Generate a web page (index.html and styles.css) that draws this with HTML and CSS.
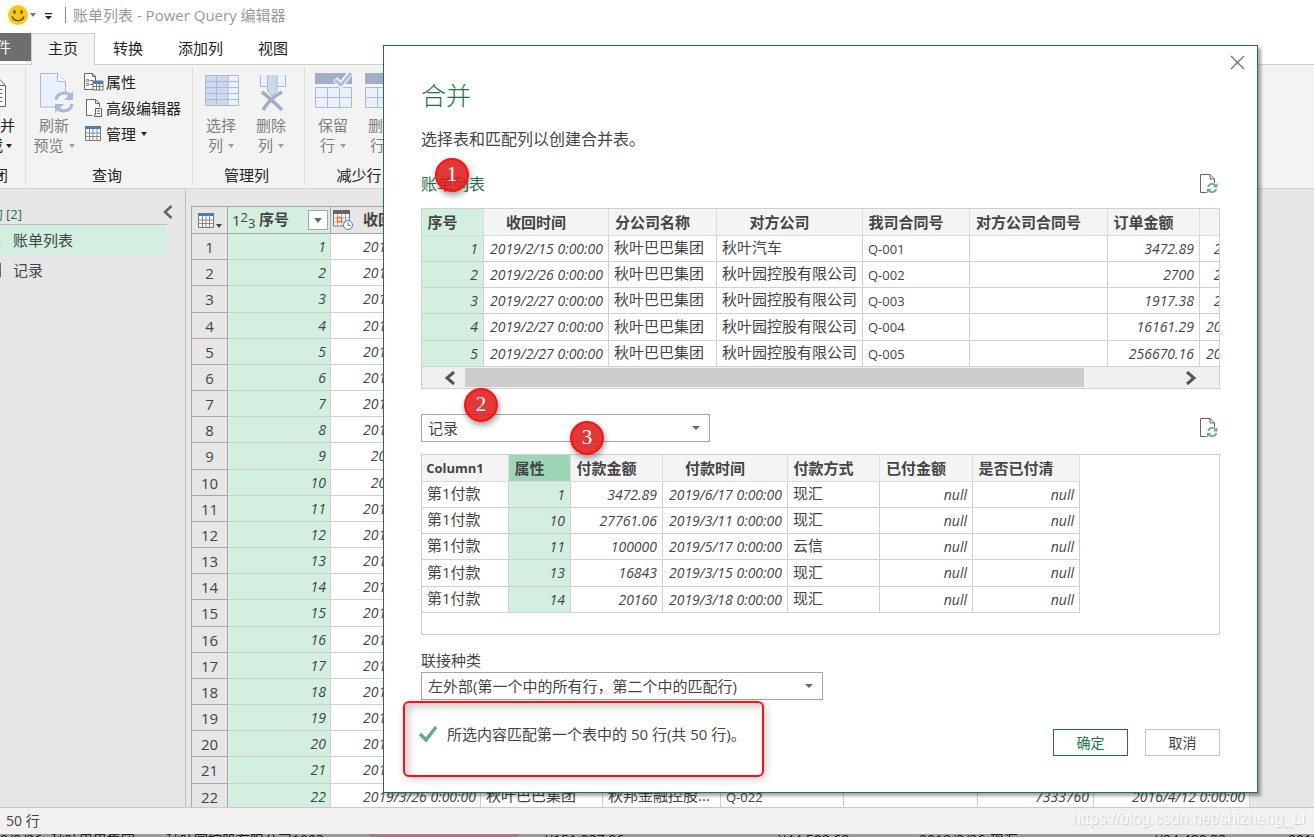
FILE: index.html
```html
<!DOCTYPE html>
<html lang="zh-CN">
<head>
<meta charset="utf-8">
<title>账单列表 - Power Query 编辑器</title>
<link rel="stylesheet" href="styles.css">
</head>
<body>
<header class="titlebar">
  <svg class="smile" viewBox="0 0 20 20"><circle cx="10" cy="10" r="10" fill="#fcc80f"/><ellipse cx="6.500" cy="7" rx="1.200" ry="2" fill="#4d4a3c"/><ellipse cx="13.500" cy="7" rx="1.200" ry="2" fill="#4d4a3c"/><path d="M4 11.500c2 5.500 10 5.500 12 0" fill="none" stroke="#4d4a3c" stroke-width="1.400"/></svg>
  <svg class="caret light" viewBox="0 0 6 4"><path d="M0 0h6L3 4z"/></svg>
  <svg class="quick" viewBox="0 0 8 7"><path d="M0 0h7v1.300H0zM0 3h7L3.500 6.500z"/></svg>
  <span class="title">账单列表 - Power Query 编辑器</span>
</header>
<nav class="tabs">
  <button class="tab file">文件</button>
  <button class="tab active">主页</button>
  <button class="tab">转换</button>
  <button class="tab">添加列</button>
  <button class="tab">视图</button>
</nav>
<section class="ribbon">
  <div class="group cut">
    <button class="big dark"><svg class="bigicon" viewBox="0 0 36 40"><path d="M1 5.500h14l8.500 9V35.500H1z" fill="#fff" stroke="#666"/><path d="M15 5.500v9h8M5 18.500h15M5 22.500h15M5 26.500h15M5 30.500h15" fill="none" stroke="#666"/></svg><span>关闭并</span><span>上载<svg class="caret" viewBox="0 0 6 4"><path d="M0 0h6L3 4z"/></svg></span></button>
    <div class="gname">关闭</div>
  </div>
  <div class="group query">
    <div class="tools">
      <button class="big"><svg class="bigicon" viewBox="0 0 36 40"><path d="M4.500 2.500h17l8 8V36h-25z" fill="#eaf1fb" stroke="#a9b9d6"/><path d="M21.500 2.500v8h8" fill="#fff" stroke="#a9b9d6"/><circle cx="28" cy="31" r="10" fill="#f3f3f3"/><path d="M20 29c1-8 12-9 15-3M36 33c-1 8-12 9-15 3" fill="none" stroke="#a9b9d6" stroke-width="3"/><path d="M37 20v9h-9zM19 42v-9h9z" fill="#a9b9d6"/></svg><span>刷新</span><span>预览<svg class="caret" viewBox="0 0 6 4"><path d="M0 0h6L3 4z"/></svg></span></button>
      <div class="stack">
        <button class="small"><svg viewBox="0 0 20 20"><path d="M.5 1.500h8l3 3V17.500H.5z" fill="#fff" stroke="#666"/><path d="M8.500 1.500v3h3M6 8.500h3M6 12.500h3" fill="none" stroke="#666"/><path d="M2.500 7.500h2v2h-2zM2.500 11.500h2v2h-2z" fill="none" stroke="#888"/><path d="M9 9h10v9H9z" fill="#fff" stroke="#777"/><path d="M9 9h10v3H9z" fill="#4a7ebb"/><path d="M9 14.500h10M12.500 12v6M15.500 12v6" stroke="#777"/></svg>属性</button>
        <button class="small"><svg viewBox="0 0 20 20"><path d="M2.500 1.500h9l4 4V17.500h-13z" fill="#fff" stroke="#666"/><path d="M11.500 1.500v4h4" fill="none" stroke="#666"/><path d="M9 9h10v11H8z" fill="#f3f3f3"/><path d="M11.500 10.500h6v8h-7v-2h1zM13 13h3M13 15.500h3" fill="#fff" stroke="#666"/></svg>高级编辑器</button>
        <button class="small"><svg viewBox="0 0 20 20"><path d="M1.500 4h15v12.500h-15z" fill="#fff" stroke="#777"/><path d="M1 2h16v3H1z" fill="#4a7ebb"/><path d="M1.500 9h15M1.500 12.500h15M5.500 5v11.500M9 5v11.500M13 5v11.500" stroke="#888"/></svg>管理<svg class="caret" viewBox="0 0 6 4"><path d="M0 0h6L3 4z"/></svg></button>
      </div>
    </div>
    <div class="gname">查询</div>
  </div>
  <div class="group">
    <div class="tools">
      <button class="big"><svg class="bigicon" viewBox="0 0 36 40"><path d="M2.500 4.500h33v30h-33z" fill="#eaf1fb" stroke="#a9b9d6"/><path d="M3 5h22v29H3z" fill="#cdd9ea"/><path d="M3 10.500h32M3 16.500h32M3 22.500h32M3 28.500h32M13.500 5v29M25 5v29" stroke="#a9b9d6"/></svg><span>选择</span><span>列<svg class="caret" viewBox="0 0 6 4"><path d="M0 0h6L3 4z"/></svg></span></button>
      <button class="big"><svg class="bigicon" viewBox="0 0 36 40"><path d="M7.500 4v11.500h7V4M23.500 4v11.500h9V4" fill="#eaf1fb" stroke="#a9b9d6"/><path d="M14.500 4v16l4.500 5 5-5V4" fill="#cdd9ea" stroke="#a9b9d6"/><path d="M9 21q7 5 20 18M29 21Q17 27 10 39" fill="none" stroke="#a0aec8" stroke-width="3.500"/></svg><span>删除</span><span>列<svg class="caret" viewBox="0 0 6 4"><path d="M0 0h6L3 4z"/></svg></span></button>
    </div>
    <div class="gname">管理列</div>
  </div>
  <div class="group last">
    <div class="tools">
      <button class="big"><svg class="bigicon" viewBox="0 0 38 40"><path d="M1 2h37v11H1z" fill="#a0aec8"/><path d="M1.500 16.500h36v20h-36zM1.500 26.500h36M13.500 16.500v20M25.500 16.500v20" fill="#eaf1fb" stroke="#a9b9d6"/><path d="M21 8l6 6L37 1" fill="none" stroke="#f3f3f3" stroke-width="6"/><path d="M21 9l6 5L37 2" fill="none" stroke="#b3bfd5" stroke-width="3"/></svg><span>保留</span><span>行<svg class="caret" viewBox="0 0 6 4"><path d="M0 0h6L3 4z"/></svg></span></button>
      <button class="big"><svg class="bigicon" viewBox="0 0 38 40"><path d="M1 2h37v11H1z" fill="#a0aec8"/><path d="M1.500 16.500h36v20h-36zM1.500 26.500h36M13.500 16.500v20M25.500 16.500v20" fill="#eaf1fb" stroke="#a9b9d6"/></svg><span>删除</span><span>行<svg class="caret" viewBox="0 0 6 4"><path d="M0 0h6L3 4z"/></svg></span></button>
    </div>
    <div class="gname">减少行</div>
  </div>
</section>
<main class="work">
  <aside class="queries">
    <div class="qhead"><span class="qtitle">查询 [2]</span><button class="collapse" aria-label="折叠"><svg viewBox="0 0 10 14"><path d="M8.500 1L2 7l6.500 6" fill="none" stroke="#666" stroke-width="2.600"/></svg></button></div>
    <ul class="qlist">
      <li class="on"><svg viewBox="0 0 12 18"><path d="M2 15L7 4l4 11z" fill="#f0bd62"/></svg><a href="#">账单列表</a></li>
      <li><svg viewBox="0 0 12 18"><path d="M0 2h10.500v14H0z" fill="#fff" stroke="#666"/><path d="M0 2h11v3H0z" fill="#4a7ebb"/></svg><a href="#">记录</a></li>
    </ul>
  </aside>
  <div class="gridpane">
    <table class="grid">
      <colgroup><col class="w36"><col class="w103"><col class="w150"><col class="w122"><col class="w118"><col class="w123"><col class="w134"><col class="w116"><col class="w156"></colgroup>
      <thead><tr>
        <th><div class="corner"><svg class="tbl" viewBox="0 0 16 15"><path d="M.5 2h15v12.500H.5z" fill="#fff" stroke="#777"/><path d="M0 0h16v3H0z" fill="#4a7ebb"/><path d="M.5 7h15M.5 10.500h15M4.500 3v11.500M8 3v11.500M11.500 3v11.500" stroke="#888"/></svg><svg class="caret" viewBox="0 0 6 4"><path d="M0 0h6L3 4z"/></svg></div></th>
        <th class="sel"><div class="colhead"><span class="type">1<sup>2</sup><sub>3</sub></span><span class="name">序号</span><button class="filter" aria-label="筛选"><svg class="caret" viewBox="0 0 6 4"><path d="M0 0h6L3 4z"/></svg></button></div></th>
        <th><div class="colhead"><svg class="cal" viewBox="0 0 20 20"><path d="M.5 2h16v14H.5z" fill="#fff" stroke="#777"/><path d="M0 0h17v4H0z" fill="#666"/><path d="M.5 8h16M.5 12h16M4.500 4v12M8.500 4v12M12.500 4v12" stroke="#aaa"/><path d="M4.500 7.500h4v4h-4z" fill="#fff" stroke="#e07b28" stroke-width="1.500"/><circle cx="15" cy="15" r="4.500" fill="#fff" stroke="#4a7ebb"/><path d="M15 12v3.500h2.500" fill="none" stroke="#4a7ebb"/></svg><span class="name date">收回时间</span></div></th>
        <th colspan="6"></th>
      </tr></thead>
      <tbody>
        <tr><th>1</th><td class="sel">1</td><td>2019/2/15 0:00:00</td><td colspan="6"></td></tr>
        <tr><th>2</th><td class="sel">2</td><td>2019/2/26 0:00:00</td><td colspan="6"></td></tr>
        <tr><th>3</th><td class="sel">3</td><td>2019/2/27 0:00:00</td><td colspan="6"></td></tr>
        <tr><th>4</th><td class="sel">4</td><td>2019/2/27 0:00:00</td><td colspan="6"></td></tr>
        <tr><th>5</th><td class="sel">5</td><td>2019/2/27 0:00:00</td><td colspan="6"></td></tr>
        <tr><th>6</th><td class="sel">6</td><td>2019/2/27 0:00:00</td><td colspan="6"></td></tr>
        <tr><th>7</th><td class="sel">7</td><td>2019/2/28 0:00:00</td><td colspan="6"></td></tr>
        <tr><th>8</th><td class="sel">8</td><td>2019/2/28 0:00:00</td><td colspan="6"></td></tr>
        <tr><th>9</th><td class="sel">9</td><td>2019/3/1 0:00:00</td><td colspan="6"></td></tr>
        <tr><th>10</th><td class="sel">10</td><td>2019/3/5 0:00:00</td><td colspan="6"></td></tr>
        <tr><th>11</th><td class="sel">11</td><td>2019/3/11 0:00:00</td><td colspan="6"></td></tr>
        <tr><th>12</th><td class="sel">12</td><td>2019/3/12 0:00:00</td><td colspan="6"></td></tr>
        <tr><th>13</th><td class="sel">13</td><td>2019/3/13 0:00:00</td><td colspan="6"></td></tr>
        <tr><th>14</th><td class="sel">14</td><td>2019/3/14 0:00:00</td><td colspan="6"></td></tr>
        <tr><th>15</th><td class="sel">15</td><td>2019/3/15 0:00:00</td><td colspan="6"></td></tr>
        <tr><th>16</th><td class="sel">16</td><td>2019/3/18 0:00:00</td><td colspan="6"></td></tr>
        <tr><th>17</th><td class="sel">17</td><td>2019/3/19 0:00:00</td><td colspan="6"></td></tr>
        <tr><th>18</th><td class="sel">18</td><td>2019/3/20 0:00:00</td><td colspan="6"></td></tr>
        <tr><th>19</th><td class="sel">19</td><td>2019/3/21 0:00:00</td><td colspan="6"></td></tr>
        <tr><th>20</th><td class="sel">20</td><td>2019/3/22 0:00:00</td><td colspan="6"></td></tr>
        <tr><th>21</th><td class="sel">21</td><td>2019/3/25 0:00:00</td><td colspan="6"></td></tr>
        <tr><th>22</th><td class="sel">22</td><td>2019/3/26 0:00:00</td><td class="txt">秋叶巴巴集团</td><td class="txt">秋邦金融控股...</td><td class="txt code">Q-022</td><td></td><td>7333760</td><td>2016/4/12 0:00:00</td></tr>
      </tbody>
    </table>
  </div>
</main>
<footer class="status"><span>50 行</span><span class="mark">https://blog.csdn.net/shizheng_Li</span></footer>
<div class="behind"><span class="b1">9/3/26</span><span class="b2">秋叶巴巴集团</span><span class="b3">秋叶园控股有限公司1023</span><span class="b4"></span><span class="b5">¥151,337.86</span><span class="b6">¥44,509.68</span><span class="b7">2019/3/26</span><span class="b8">现汇</span><span class="b9">¥24,480.33</span><span class="b10">2019</span></div>

<div class="dialog" role="dialog" aria-labelledby="dlg-title">
  <button class="close" aria-label="关闭"><svg viewBox="0 0 15 15"><path d="M1 1l13 13M14 1L1 14" fill="none" stroke="#777" stroke-width="1.400"/></svg></button>
  <h1 id="dlg-title">合并</h1>
  <p class="desc">选择表和匹配列以创建合并表。</p>
  <div class="row first"><h2>账单列表</h2><button class="refresh" aria-label="刷新"><svg viewBox="0 0 18 20"><path d="M6.500 18.500h-6V.5h9.500l4.500 4.500v4" fill="none" stroke="#666"/><path d="M10 .5V5h4.500" fill="none" stroke="#666"/><path d="M8 13c1.500-4 6.500-4 8-1M16.500 15c-1.500 4-6.500 4-8 1" fill="none" stroke="#6fab93" stroke-width="1.800"/><path d="M17.500 9v4.500H13zM7 19.500V15h4.500z" fill="#6fab93"/></svg></button></div>
  <div class="preview">
    <table class="data">
      <colgroup><col class="w62"><col class="w125"><col class="w108"><col class="w146"><col class="w107"><col class="w138"><col class="w92"><col class="w125"></colgroup>
      <thead><tr><th class="sel">序号</th><th>收回时间</th><th>分公司名称</th><th>对方公司</th><th>我司合同号</th><th>对方公司合同号</th><th>订单金额</th><th></th></tr></thead>
      <tbody>
        <tr><td class="sel">1</td><td>2019/2/15 0:00:00</td><td class="txt">秋叶巴巴集团</td><td class="txt">秋叶汽车</td><td class="txt code">Q-001</td><td></td><td>3472.89</td><td>2019/5/6 0:00:00</td></tr>
        <tr><td class="sel">2</td><td>2019/2/26 0:00:00</td><td class="txt">秋叶巴巴集团</td><td class="txt">秋叶园控股有限公司</td><td class="txt code">Q-002</td><td></td><td>2700</td><td>2019/5/6 0:00:00</td></tr>
        <tr><td class="sel">3</td><td>2019/2/27 0:00:00</td><td class="txt">秋叶巴巴集团</td><td class="txt">秋叶园控股有限公司</td><td class="txt code">Q-003</td><td></td><td>1917.38</td><td>2019/5/6 0:00:00</td></tr>
        <tr><td class="sel">4</td><td>2019/2/27 0:00:00</td><td class="txt">秋叶巴巴集团</td><td class="txt">秋叶园控股有限公司</td><td class="txt code">Q-004</td><td></td><td>16161.29</td><td>2019/5/16 0:00:00</td></tr>
        <tr><td class="sel">5</td><td>2019/2/27 0:00:00</td><td class="txt">秋叶巴巴集团</td><td class="txt">秋叶园控股有限公司</td><td class="txt code">Q-005</td><td></td><td>256670.16</td><td>2019/5/16 0:00:00</td></tr>
      </tbody>
    </table>
    <div class="scroll"><button aria-label="向左"><svg viewBox="0 0 12 14"><path d="M10 1L3 7l7 6" fill="none" stroke="#555" stroke-width="3"/></svg></button><div class="track"><div class="thumb"></div></div><button aria-label="向右"><svg viewBox="0 0 12 14"><path d="M2 1l7 6-7 6" fill="none" stroke="#555" stroke-width="3"/></svg></button></div>
  </div>
  <div class="row chooser"><div class="pick source"><select aria-label="第二个表"><option>记录</option></select><svg class="caret" viewBox="0 0 8 4"><path d="M0 0h8L4 4z"/></svg></div><button class="refresh" aria-label="刷新"><svg viewBox="0 0 18 20"><path d="M6.500 18.500h-6V.5h9.500l4.500 4.500v4" fill="none" stroke="#666"/><path d="M10 .5V5h4.500" fill="none" stroke="#666"/><path d="M8 13c1.500-4 6.500-4 8-1M16.500 15c-1.500 4-6.500 4-8 1" fill="none" stroke="#6fab93" stroke-width="1.800"/><path d="M17.500 9v4.500H13zM7 19.500V15h4.500z" fill="#6fab93"/></svg></button></div>
  <div class="preview">
    <table class="data">
      <colgroup><col class="w87"><col class="w62"><col class="w92"><col class="w125"><col class="w92"><col class="w93"><col class="w107"></colgroup>
      <thead><tr><th class="code">Column1</th><th class="picked">属性</th><th>付款金额</th><th>付款时间</th><th>付款方式</th><th>已付金额</th><th>是否已付清</th></tr></thead>
      <tbody>
        <tr><td class="txt">第1付款</td><td class="sel">1</td><td>3472.89</td><td>2019/6/17 0:00:00</td><td class="txt">现汇</td><td>null</td><td>null</td></tr>
        <tr><td class="txt">第1付款</td><td class="sel">10</td><td>27761.06</td><td>2019/3/11 0:00:00</td><td class="txt">现汇</td><td>null</td><td>null</td></tr>
        <tr><td class="txt">第1付款</td><td class="sel">11</td><td>100000</td><td>2019/5/17 0:00:00</td><td class="txt">云信</td><td>null</td><td>null</td></tr>
        <tr><td class="txt">第1付款</td><td class="sel">13</td><td>16843</td><td>2019/3/15 0:00:00</td><td class="txt">现汇</td><td>null</td><td>null</td></tr>
        <tr><td class="txt">第1付款</td><td class="sel">14</td><td>20160</td><td>2019/3/18 0:00:00</td><td class="txt">现汇</td><td>null</td><td>null</td></tr>
      </tbody>
    </table>
  </div>
  <label class="joinlabel" for="join">联接种类</label>
  <div class="pick join"><select id="join"><option>左外部(第一个中的所有行，第二个中的匹配行)</option></select><svg class="caret" viewBox="0 0 8 4"><path d="M0 0h8L4 4z"/></svg></div>
  <div class="foot">
    <svg class="check" viewBox="0 0 18 16"><path d="M1 8l6 6L17 1" fill="none" stroke="#6aa58d" stroke-width="3.400"/></svg>
    <span class="match">所选内容匹配第一个表中的 50 行(共 50 行)。</span>
    <button class="btn ok">确定</button><button class="btn">取消</button>
  </div>
  <div class="redbox"></div>
  <span class="pin p1">1</span><span class="pin p2">2</span><span class="pin p3">3</span>
</div>
</body>
</html>
```
FILE: styles.css
```css
* { box-sizing: border-box; }
body {
  margin: 0;
  height: 100vh;
  display: flex;
  flex-direction: column;
  overflow: hidden;
  position: relative;
  background: #fff;
  color: #444;
  font: 15px/20px "Open Sans", "Noto Sans CJK SC", sans-serif;
}
button {
  font: inherit;
  color: inherit;
  background: none;
  border: 0;
  padding: 0;
}
svg { display: block; flex: none; }
.caret { width: 6px; height: 4px; fill: currentColor; }

.titlebar {
  flex: none;
  height: 33px;
  display: flex;
  align-items: center;
  padding: 0 8px 4px;
}
.smile { width: 20px; height: 20px; }
.caret.light { color: #777; margin: 0 12px 0 2px; }
.quick { width: 8px; height: 7px; fill: #222; margin: 3px 12px 0 -3px; }
.title {
  border-left: 1px solid #888;
  padding-left: 7px;
  line-height: 16px;
  color: #999;
}

.tabs {
  flex: none;
  height: 32px;
  display: flex;
  align-items: flex-start;
  border-bottom: 1px solid #d0d0d0;
  color: #222;
}
.tab { height: 30px; padding: 0 17px 0 18px; }
.tab.file {
  width: 31px;
  height: 28px;
  display: flex;
  justify-content: flex-end;
  align-items: center;
  padding: 0 20px 0 0;
  background: #6e6e6e;
  color: #fff;
  white-space: nowrap;
}
.tab.active {
  height: 32px;
  padding: 0 16px 3px;
  border: 1px solid #d0d0d0;
  border-bottom: 0;
  background: #f3f3f3;
}

.ribbon {
  flex: none;
  height: 124px;
  display: flex;
  padding: 2px 0 3px;
  background: #f3f3f3;
  border-bottom: 1px solid #d0d0d0;
  color: #222;
}
.group {
  width: 112px;
  display: flex;
  flex-direction: column;
  justify-content: space-between;
  border-right: 1px solid #dcdcdc;
  padding: 4px 0 0;
}
.group.cut { width: 26px; overflow: hidden; align-items: flex-end; padding-right: 10px; }
.group.cut .gname { padding-right: 7px; }
.group.query { width: 167px; }
.group.last { border: 0; }
.gname { text-align: center; line-height: 20px; padding-right: 4px; white-space: nowrap; }
.tools { display: flex; padding-left: 3px; }
.big {
  width: 50px;
  display: flex;
  flex-direction: column;
  align-items: center;
  color: #808080;
  line-height: 20px;
  white-space: nowrap;
}
.big span { display: flex; align-items: center; gap: 5px; }
.big .caret { margin-top: 2px; color: #a0a0a0; }
.big.dark { color: #222; align-items: flex-end; }
.big.dark span { gap: 3px; }
.big.dark .bigicon { margin-right: -4px; }
.big.dark .caret { margin-right: 3px; color: #222; }
.bigicon { width: 38px; height: 40px; margin-bottom: 4px; overflow: visible; }
.query .big { margin-right: 5px; }
.stack { display: flex; flex-direction: column; margin-top: -2px; }
.small { display: flex; align-items: center; gap: 2px; height: 26px; white-space: nowrap; }
.small svg { width: 20px; height: 20px; }
.small .caret { width: 6px; height: 4px; margin-left: 3px; }

.work {
  flex: 1;
  min-height: 0;
  display: flex;
  background: #e6e6e6;
}
.queries {
  flex: none;
  width: 186px;
  border-right: 1px solid #bcbcbc;
  padding-right: 18px;
  overflow: hidden;
}
.qhead {
  height: 36px;
  display: flex;
  align-items: flex-end;
  border-bottom: 1px solid #bcbcbc;
  color: #217346;
  font-size: 13px;
}
.qtitle { width: 22px; display: flex; justify-content: flex-end; white-space: nowrap; }
.collapse { width: 10px; height: 14px; margin: 0 -6px 5px auto; }
.collapse svg { width: 10px; height: 14px; }
.qlist { list-style: none; margin: 0; padding: 0; }
.qlist li { height: 30px; display: flex; align-items: center; gap: 11px; }
.qlist svg { width: 12px; height: 18px; margin-left: -10px; }
.qlist a { color: #444; text-decoration: none; }
.on { background: #d3efe0; }

.gridpane { flex: 1; min-width: 0; padding: 17px 0 0 5px; overflow: hidden; }
table { border-collapse: separate; border-spacing: 0; table-layout: fixed; }
th, td { height: 26px; padding: 0; overflow: hidden; white-space: nowrap; }
thead th { height: 27px; }
td {
  font-size: 14px;
  font-style: italic;
  text-align: right;
  line-height: 20px;
  background: #fff;
  border: 0 solid #d0d0d0;
  border-width: 0 1px 1px 0;
}
td.txt { font-size: 15px; font-style: normal; text-align: left; padding: 0 0 3px 5px; }
td.code, th.code { font-size: 13px; }
td.txt.code { padding-bottom: 0; }
td.sel, th.sel { background: #d3efe0; }

.grid { width: 1059px; border: 1px solid #a6a6a6; border-right: 0; }
.grid td { padding-right: 4px; }
.grid th {
  background: #e6e6e6;
  border: 0 solid #a6a6a6;
  border-width: 0 1px 1px 0;
  font-weight: 400;
}
.grid thead th { font-weight: 600; }
.grid th.sel { background: #d3efe0; }
.grid tbody tr:nth-child(6n+3) td, .grid tbody tr:nth-child(6n+3) th { height: 27px; }
.corner { display: flex; align-items: flex-end; justify-content: center; gap: 2px; }
.tbl { width: 16px; height: 15px; }
.colhead { display: flex; align-items: center; padding: 0 2px 0 4px; color: #444; }
.type { width: 27px; text-align: left; font-weight: 400; line-height: 16px; }
.type sup, .type sub { font-size: 13px; line-height: 0; }
.type sup { vertical-align: 4px; }
.type sub { vertical-align: -2px; }
.name { padding-bottom: 3px; }
.filter {
  width: 20px;
  height: 20px;
  margin-left: auto;
  display: grid;
  place-items: center;
  border: 1px solid #a6a6a6;
  background: #fff;
  color: #666;
}
.filter .caret { width: 8px; height: 5px; }
.cal { width: 20px; height: 20px; margin-left: -2px; }
.name.date { margin-left: 10px; }

.w36 { width: 36px; } .w62 { width: 62px; } .w87 { width: 87px; } .w92 { width: 92px; }
.w93 { width: 93px; } .w103 { width: 103px; } .w107 { width: 107px; } .w108 { width: 108px; }
.w116 { width: 116px; } .w118 { width: 118px; } .w122 { width: 122px; } .w123 { width: 123px; }
.w125 { width: 125px; } .w134 { width: 134px; } .w138 { width: 138px; } .w146 { width: 146px; }
.w150 { width: 150px; } .w156 { width: 156px; }

.status {
  flex: none;
  height: 27px;
  display: flex;
  align-items: center;
  justify-content: space-between;
  padding: 0 9px 0 6px;
  background: #f3f1f0;
  border-top: 1px solid #c8c8c8;
  font-size: 14px;
}
.mark { color: #fafafa; font: 16px/20px "Liberation Sans", sans-serif; text-shadow: 1px 1px 1px #ccc; padding-bottom: 4px; }
.behind {
  flex: none;
  height: 3px;
  display: flex;
  overflow: hidden;
  background: #9c9c9c;
  color: #222;
  font-size: 14px;
  line-height: 12px;
  white-space: nowrap;
}
.behind span { flex: none; overflow: hidden; }
.b1 { width: 51px; } .b2 { width: 115px; } .b3 { width: 203px; }
.b4 { width: 150px; background: #a67c80; }
.b5 { width: 259px; padding-left: 26px; } .b6 { width: 141px; } .b7 { width: 71px; }
.b8 { width: 165px; } .b9 { width: 133px; } .b10 { width: 40px; }

.dialog {
  position: absolute;
  left: 383px;
  right: 56px;
  top: 45px;
  bottom: 44px;
  display: flex;
  flex-direction: column;
  padding: 31px 37px 0;
  background: #fff;
  border: 1px solid #217346;
  box-shadow: 3px 3px 3px rgba(0, 0, 0, .35);
}
.close { position: absolute; top: 9px; right: 12px; width: 15px; height: 15px; }
.close svg { width: 15px; height: 15px; }
h1 { margin: 0; font-size: 25px; font-weight: 300; line-height: 36px; color: #217346; }
.desc { margin: 14px 0 0; font-size: 16px; line-height: 24px; }
.row { display: flex; align-items: center; justify-content: space-between; }
.row.first { margin-top: 21px; height: 24px; }
.row.chooser { margin-top: 25px; height: 28px; }
h2 { margin: 0; font-size: 16px; font-weight: 400; color: #217346; }
.refresh { width: 18px; height: 20px; margin-right: 2px; }
.refresh svg { width: 18px; height: 20px; }
.preview {
  margin-top: 12px;
  height: 181px;
  flex: none;
  overflow: hidden;
  border: 1px solid #d0d0d0;
  display: flex;
  flex-direction: column;
}
.data { flex: none; width: 0; }
.data th {
  padding-right: 20px;
  text-align: center;
  background: #f4f4f4;
  border: 0 solid #dcdcdc;
  border-width: 0 1px 1px 0;
  font-weight: 700;
  line-height: 20px;
}
.data td { padding-right: 5px; }
.data td.txt { padding-right: 0; }
.data tbody tr:nth-child(4) td { height: 27px; }
.data th.sel { background: #d3efe0; }
.data th.picked { background: #9fd5b7; }
.scroll { flex: 1; display: flex; align-items: center; padding: 0 22px; background: #f0f0f0; }
.scroll svg { width: 12px; height: 14px; }
.track { flex: 1; height: 19px; margin: 0 9px; }
.thumb { width: 87%; height: 19px; background: #cdcdcd; }
.pick { position: relative; height: 28px; flex: none; }
.pick.source { width: 289px; }
.pick.join { width: 402px; }
.pick select {
  appearance: none;
  width: 100%;
  height: 28px;
  padding: 0 6px;
  border: 1px solid #a6a6a6;
  border-radius: 0;
  background: #fff;
  color: #444;
  font: inherit;
}
.pick .caret { position: absolute; right: 10px; top: 12px; width: 8px; height: 4px; color: #666; }
.joinlabel { margin: 15px 0 2px; line-height: 20px; }
.foot { display: flex; align-items: flex-start; margin-top: 24px; }
.check { width: 18px; height: 16px; margin: 2px 10px 0 -2px; }
.match { flex: 1; line-height: 20px; }
.btn {
  width: 75px;
  height: 27px;
  margin: 5px 0 0 17px;
  border: 1px solid #c6c6c6;
  background: #fff;
  font-size: 14px;
}
.btn.ok { border-color: #217346; color: #217346; }

.redbox {
  position: absolute;
  left: 19px;
  top: 655px;
  width: 361px;
  height: 76px;
  border: 2px solid #f81212;
  border-radius: 6px;
  box-shadow: 2px 2px 8px rgba(0, 0, 0, .2), inset 4px 4px 8px rgba(0, 0, 0, .2);
}
.pin {
  position: absolute;
  width: 34px;
  height: 34px;
  border: 2px solid #f81212;
  border-radius: 50%;
  background: rgba(222, 28, 28, .88);
  color: #fff;
  font: 21px/29px "Liberation Serif", serif;
  text-align: center;
  box-shadow: 1px 3px 6px rgba(0, 0, 0, .4);
}
.p1 { left: 51px; top: 112px; }
.p2 { left: 80px; top: 342px; }
.p3 { left: 186px; top: 375px; }
```
